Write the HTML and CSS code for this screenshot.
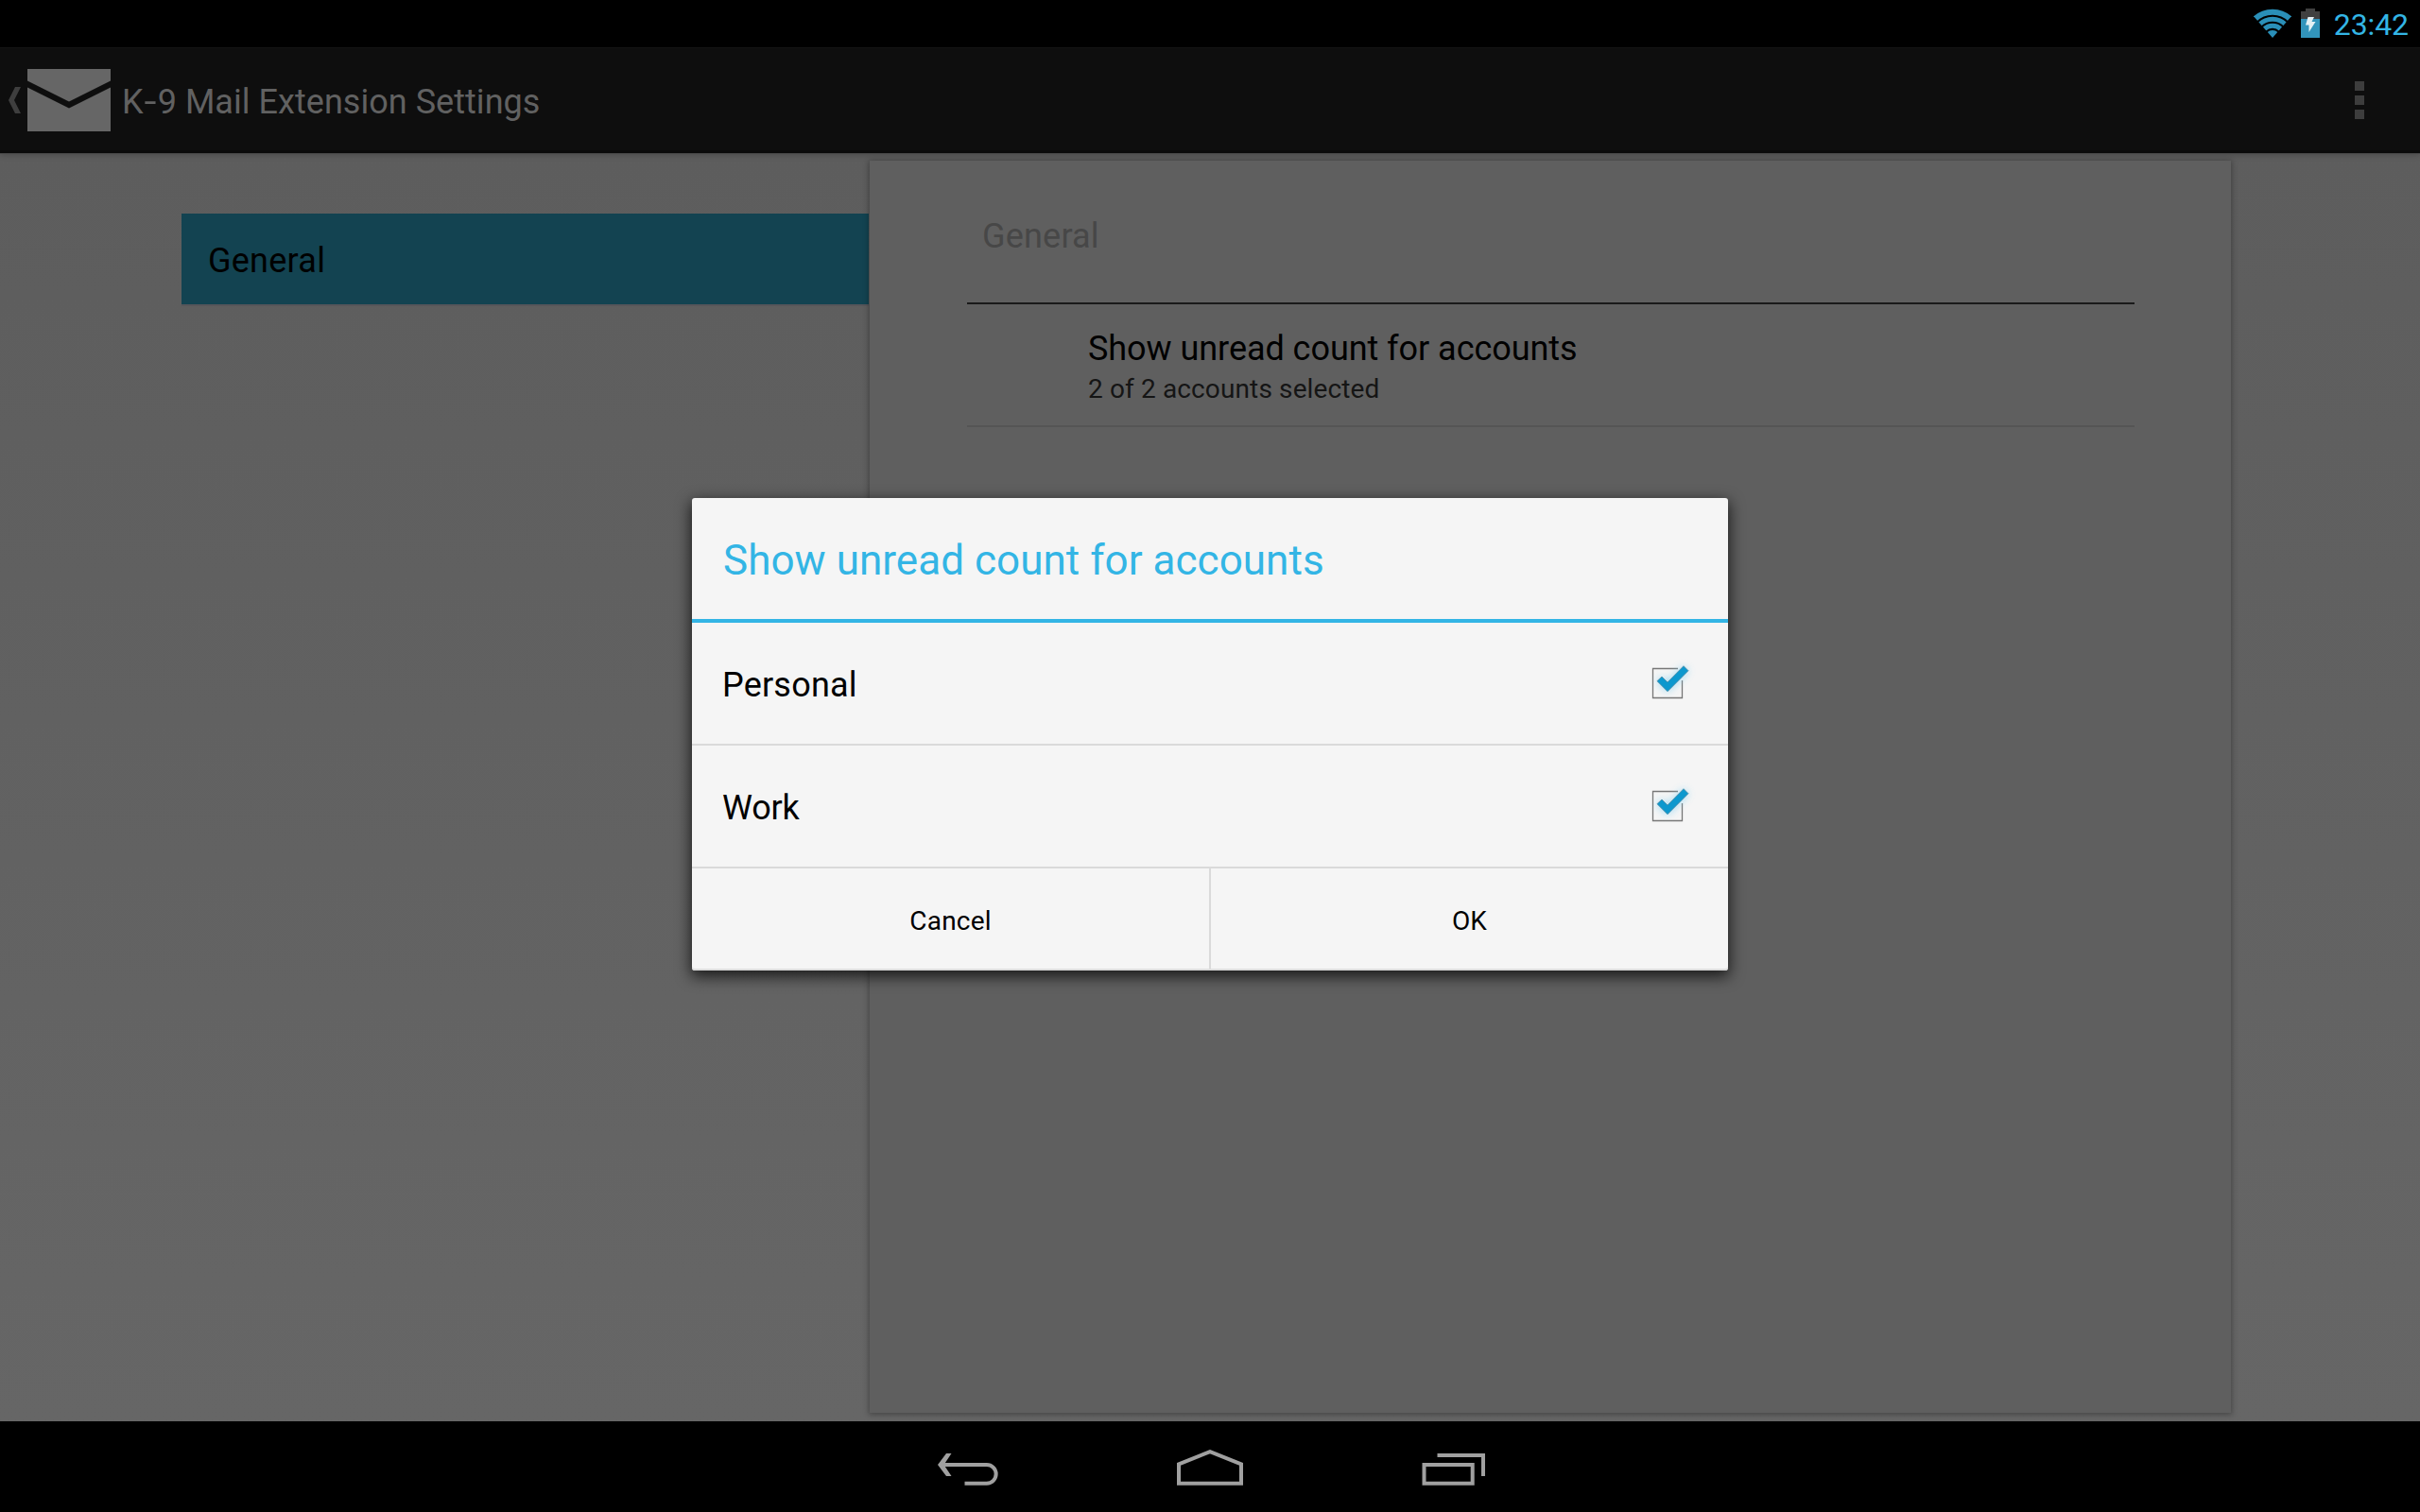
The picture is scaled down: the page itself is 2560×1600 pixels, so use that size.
FILE: index.html
```html
<!DOCTYPE html>
<html lang="en">
<head>
<meta charset="utf-8">
<title>K-9 Mail Extension Settings</title>
<link rel="stylesheet" href="styles.css">
</head>
<body>
<div class="screen">
  <header class="status-bar">
    <svg class="wifi" width="40" height="31" viewBox="0 0 40 31">
      <defs><clipPath id="fan"><path d="M20 31 L0 8.3 V0 H40 V8.3 Z"/></clipPath></defs>
      <g clip-path="url(#fan)">
        <circle class="wifi-dot" cx="20" cy="31" r="8"/>
        <circle class="wifi-arc" cx="20" cy="31" r="12.7"/>
        <circle class="wifi-arc" cx="20" cy="31" r="19.7"/>
        <circle class="wifi-arc wifi-arc-outer" cx="20" cy="31" r="27.2"/>
      </g>
    </svg>
    <svg class="battery" width="20" height="31" viewBox="0 0 20 31">
      <path class="battery-case" d="M5 0H15V3H20V11H0V3H5Z"/>
      <path class="battery-level" d="M0 11H20V31H0Z"/>
      <path class="battery-bolt" d="M7.5 9H14L11.5 14H15.5L8.5 25V17.5H5Z"/>
    </svg>
    <span class="clock">23:42</span>
  </header>

  <nav class="action-bar">
    <svg class="up" width="13" height="28" viewBox="0 0 13 28"><path d="M7 0H13L6 14L13 28H7L0 14Z"/></svg>
    <svg class="logo" width="88" height="66" viewBox="0 0 88 66">
      <path d="M0 0H88V12.5L44 34.5L0 12.5Z"/>
      <path d="M0 19.5L44 41.5L88 19.5V66H0Z"/>
    </svg>
    <h1 class="app-title">K<span class="hyphen">-</span>9 Mail Extension Settings</h1>
    <div class="overflow"><i></i><i></i><i></i></div>
  </nav>

  <main class="content">
    <aside class="headers">
      <div class="header-item">General</div>
    </aside>
    <section class="panel">
      <h2 class="panel-title">General</h2>
      <div class="preference">
        <div class="pref-title">Show unread count for accounts</div>
        <div class="pref-summary">2 of 2 accounts selected</div>
      </div>
    </section>
  </main>

  <footer class="nav-bar">
    <svg width="66" height="40" viewBox="0 0 66 40">
      <path d="M3 14H52.8A9.85 9.85 0 0 1 52.8 33.7H29.5"/>
      <path class="solid" d="M10 2H15.5L7.5 14L15.5 26H10L1 14Z"/>
    </svg>
    <svg width="70" height="40" viewBox="0 0 70 40">
      <path d="M2 33.7V13.3L35 0.2L68 13.3V33.7Z"/>
    </svg>
    <svg width="67" height="40" viewBox="0 0 67 40">
      <path d="M2.5 14H53.7V33.7H2.5ZM16.5 4H65V26"/>
    </svg>
  </footer>

  <div class="dialog" role="dialog">
    <h2 class="dialog-title">Show unread count for accounts</h2>
    <div class="choice">
      <span class="choice-personal">Personal</span>
      <svg class="check" width="56" height="56" viewBox="0 0 56 56">
        <path class="box" d="M37 14.5H10.5V45.5H41.5V27"/>
        <path class="glow" d="M15 28L20 23L26 29L43 12L48 17L26 39Z"/>
        <path class="tick" d="M15 27.7L20 23L26 29L43 11.7L48 16.7L26 38.7Z"/>
      </svg>
    </div>
    <div class="choice">
      <span class="choice-work">Work</span>
      <svg class="check" width="56" height="56" viewBox="0 0 56 56">
        <path class="box" d="M37 14.5H10.5V45.5H41.5V27"/>
        <path class="glow" d="M15 28L20 23L26 29L43 12L48 17L26 39Z"/>
        <path class="tick" d="M15 27.7L20 23L26 29L43 11.7L48 16.7L26 38.7Z"/>
      </svg>
    </div>
    <div class="buttons">
      <button type="button">Cancel</button>
      <button type="button">OK</button>
    </div>
  </div>
</div>
</body>
</html>
```
FILE: styles.css
```css
* { box-sizing: border-box; }

body {
  margin: 0;
  background: #000;
  font-family: Roboto, sans-serif;
  color: #000;
}

h1, h2 { margin: 0; font-weight: 400; }
svg { display: block; flex: none; }

.screen {
  position: relative;
  display: flex;
  flex-direction: column;
  width: 2560px;
  height: 1600px;
  overflow: hidden;
}

/* Status bar */
.status-bar {
  display: flex;
  justify-content: flex-end;
  align-items: flex-start;
  height: 50px;
  padding: 9px 12px 0 0;
}
.wifi-dot { fill: #2a8fb8; }
.wifi-arc { fill: none; stroke: #2a8fb8; stroke-width: 5; }
.wifi-arc-outer { stroke-width: 6; }
.battery { margin-left: 10px; }
.battery-case { fill: #404040; }
.battery-level { fill: #3294bb; }
.battery-bolt { fill: #e4f0f4; }
.clock {
  margin: -1px 0 0 15px;
  font-size: 32px;
  line-height: 36px;
  letter-spacing: -0.1px;
  color: #33b5e5;
}

/* Action bar */
.action-bar {
  position: relative;
  z-index: 1;
  display: flex;
  align-items: center;
  height: 112px;
  padding: 0 59px 0 9px;
  background: #0e0e0e;
  border-top: 1px solid #141414;
  border-bottom: 3px solid #0a0a0a;
  box-shadow: 0 1px 0 #474747, 0 2px 6px rgba(0, 0, 0, .22);
}
.up { fill: #3e3e3e; margin-top: 2px; }
.logo { margin-left: 7px; margin-top: 2px; fill: #666; }
.app-title {
  margin: 6px 0 0 12px;
  font-size: 36px;
  line-height: 42px;
  letter-spacing: .04px;
  color: #616161;
}
.hyphen {
  display: inline-block;
  margin: 0 3px 0 2px;
  transform: scaleX(1.3);
}
.overflow { display: grid; gap: 5px; margin: 2px 0 0 auto; }
.overflow i { width: 10px; height: 10px; background: #3d3d3d; }

/* Settings */
.content {
  display: flex;
  height: 1342px;
  padding: 8px 200px 9px 192px;
  background: linear-gradient(#5d5d5d, #666);
}
.headers { width: 728px; padding: 56px 1px 0 0; }
.header-item {
  height: 98px;
  padding: 3px 0 0 28px;
  background: #134351;
  border-bottom: 2px solid #56565a;
  font-size: 36px;
  line-height: 94px;
  letter-spacing: .25px;
}
.panel {
  width: 1440px;
  padding: 0 102px 0 103px;
  background: #5f5f5f;
  box-shadow: 0 1px 6px 1px rgba(0, 0, 0, .32);
}
.panel-title {
  height: 152px;
  padding: 55px 0 0 16px;
  border-bottom: 2px solid #1a1a1a;
  font-size: 36px;
  line-height: 50px;
  letter-spacing: .2px;
  color: #474747;
}
.preference {
  height: 130px;
  padding: 26px 0 0 128px;
  border-bottom: 2px solid #555;
}
.pref-title { font-size: 36px; line-height: 42px; letter-spacing: -.05px; }
.pref-summary {
  padding-top: 5px;
  font-size: 28px;
  line-height: 34px;
  letter-spacing: .13px;
  color: #151515;
}

/* Navigation bar */
.nav-bar {
  display: flex;
  gap: 188px;
  height: 96px;
  padding: 32px 0 0 991px;
}
.nav-bar svg { overflow: visible; fill: none; stroke: #a0a0a0; stroke-width: 4; }
.nav-bar svg:last-child { margin-left: 1px; }
.nav-bar .solid { fill: #a0a0a0; stroke: none; }

/* Dialog */
.dialog {
  position: absolute;
  z-index: 2;
  left: 732px;
  top: 527px;
  width: 1096px;
  height: 500px;
  background: #f5f5f5;
  border-radius: 3px;
  box-shadow: 0 5px 16px 1px rgba(0, 0, 0, .75), inset 0 -2px 0 #dcdcdc;
}
.dialog-title {
  height: 132px;
  padding: 4px 33px 0;
  border-bottom: 4px solid #33b5e5;
  font-size: 44px;
  line-height: 124px;
  letter-spacing: .04px;
  color: #33b5e5;
}
.choice {
  display: flex;
  justify-content: space-between;
  height: 130px;
  padding: 0 34px 0 32px;
  border-bottom: 2px solid #dadada;
  font-size: 36px;
  line-height: 133px;
}
.choice-personal { letter-spacing: .2px; }
.choice-work { letter-spacing: -.2px; }
.check { margin-top: 34px; overflow: visible; }
.box { fill: none; stroke: #777; stroke-width: 1.3; }
.glow { fill: #7fd0f2; filter: blur(4px); opacity: .8; }
.tick { fill: #0c98ce; stroke: #4f8ba5; stroke-width: .8; }
.buttons { display: flex; height: 108px; }
.buttons button {
  flex: 1;
  padding: 3px 0 0;
  border: 0;
  background: none;
  font: 28px/105px Roboto, sans-serif;
  letter-spacing: .2px;
  color: #000;
}
.buttons button + button { border-left: 2px solid #dadada; }
```
